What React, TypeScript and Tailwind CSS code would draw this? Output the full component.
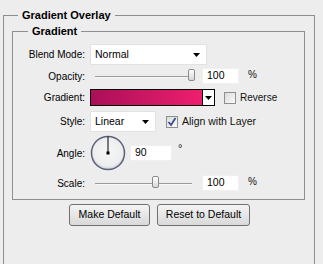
import React from "react";

const font = { fontFamily: '"Liberation Sans", Arial, sans-serif' };

function Arrow() {
  return (
    <svg width="7" height="4" viewBox="0 0 7 4">
      <polygon points="0,0 7,0 3.5,4" fill="#000" />
    </svg>
  );
}

function Dropdown({ value, width }: { value: string; width: string }) {
  return (
    <div className={`${width} h-[21px] bg-white border border-[#e2e2e2] flex items-center justify-between pl-[4px] pr-[6px]`}>
      <span className="text-[10.5px] text-black">{value}</span>
      <Arrow />
    </div>
  );
}

function Slider({ thumb }: { thumb: number }) {
  return (
    <div className="relative w-[108px] h-full">
      <div className="absolute left-[5px] right-[6px] top-1/2 h-[2px] border-t border-[#9a9a9a] bg-[#f8f8f8]" />
      <div
        className="absolute top-[1px] w-[7px] h-[12px] rounded-[2px] border border-[#8a8a8a] bg-gradient-to-b from-white to-[#d8d8d8]"
        style={{ left: thumb }}
      />
    </div>
  );
}

function NumInput({ value, width }: { value: string; width: string }) {
  return (
    <div className={`${width} h-[16px] bg-white border border-[#f0f0f0] flex items-center pl-[4px]`}>
      <span className="text-[10.5px] text-black">{value}</span>
    </div>
  );
}

function Check({ checked }: { checked?: boolean }) {
  return (
    <div className="w-[12px] h-[12px] border border-[#8e8f8f] bg-gradient-to-br from-[#dcdcdc] to-[#fafafa] flex items-center justify-center">
      {checked && (
        <svg width="10" height="10" viewBox="0 0 10 10">
          <path d="M1.5 5 L4 8 L8.5 1" fill="none" stroke="#3d4d8a" strokeWidth="1.8" />
        </svg>
      )}
    </div>
  );
}

function Label({ children }: { children: React.ReactNode }) {
  return <div className="w-[73px] text-right text-[10px] text-black pr-[1px]">{children}</div>;
}

export default function App() {
  return (
    <div className="w-[323px] h-[264px] bg-[#ededed] overflow-hidden pt-[8px] pl-[3px] text-[#111]" style={font}>
      <fieldset className="w-[312px] h-[270px] border border-[#8f8f8f] m-0 p-0">
        <legend className="ml-[14px] px-[4px] font-bold text-[11px] leading-[14px] text-black">Gradient Overlay</legend>

        <fieldset className="ml-[8px] mt-[2px] w-[293px] h-[176px] border border-[#8f8f8f] m-0 p-0">
          <legend className="ml-[15px] px-[4px] font-bold text-[11px] leading-[14px] text-black">Gradient</legend>

          <div className="flex flex-col">
            {/* Blend Mode */}
            <div className="flex items-center gap-[4px] mt-[6px] h-[21px]">
              <Label>Blend Mode:</Label>
              <Dropdown value="Normal" width="w-[117px]" />
            </div>

            {/* Opacity */}
            <div className="flex items-center gap-[4px] mt-[3px] h-[16px]">
              <Label>Opacity:</Label>
              <Slider thumb={98} />
              <NumInput value="100" width="w-[37px]" />
              <span className="ml-[5px] text-[10px] -mt-[4px]">%</span>
            </div>

            {/* Gradient */}
            <div className="flex items-center gap-[4px] mt-[5px] h-[17px]">
              <Label>Gradient:</Label>
              <div className="w-[125px] h-[17px] border border-black flex">
                <div className="flex-1 border-r border-black bg-gradient-to-r from-[#ab0f58] to-[#ee1f6e]" />
                <div className="w-[11px] bg-white flex items-center justify-center">
                  <Arrow />
                </div>
              </div>
              <div className="ml-[5px]">
                <Check />
              </div>
              <span className="text-[10px]">Reverse</span>
            </div>

            {/* Style */}
            <div className="flex items-center gap-[4px] mt-[5px] h-[21px]">
              <Label>Style:</Label>
              <Dropdown value="Linear" width="w-[66px]" />
              <div className="ml-[6px]">
                <Check checked />
              </div>
              <span className="text-[10.5px]">Align with Layer</span>
            </div>

            {/* Angle */}
            <div className="flex items-center gap-[4px] mt-[3px] h-[36px]">
              <Label>Angle:</Label>
              <svg width="36" height="36" viewBox="0 0 36 36">
                <defs>
                  <radialGradient id="dial" cx="50%" cy="45%" r="55%">
                    <stop offset="0%" stopColor="#f6f6f6" />
                    <stop offset="80%" stopColor="#eeeeee" />
                    <stop offset="100%" stopColor="#c9cfe0" />
                  </radialGradient>
                </defs>
                <circle cx="18" cy="18" r="16.5" fill="url(#dial)" stroke="#5c627c" strokeWidth="1.5" />
                <line x1="18" y1="1.5" x2="18" y2="18" stroke="#000" strokeWidth="1" />
                <rect x="16.5" y="16.5" width="3" height="3" fill="#000" />
              </svg>
              <div className="self-start mt-[10px]">
                <NumInput value="90" width="w-[42px]" />
              </div>
              <span className="self-start mt-[5px] ml-[2px] text-[11px]">°</span>
            </div>

            {/* Scale */}
            <div className="flex items-center gap-[4px] mt-[4px] h-[16px]">
              <Label>Scale:</Label>
              <Slider thumb={62} />
              <NumInput value="100" width="w-[37px]" />
              <span className="ml-[5px] text-[10px] -mt-[4px]">%</span>
            </div>
          </div>
        </fieldset>

        <div className="flex gap-[7px] ml-[65px] mt-[4px]">
          <button className="w-[81px] h-[22px] rounded-[3px] border border-[#707070] bg-gradient-to-b from-[#f4f4f4] to-[#d9d9d9] text-[10.5px] text-black">
            Make Default
          </button>
          <button className="w-[93px] h-[22px] rounded-[3px] border border-[#707070] bg-gradient-to-b from-[#f4f4f4] to-[#d9d9d9] text-[10.5px] text-black">
            Reset to Default
          </button>
        </div>
      </fieldset>
    </div>
  );
}
